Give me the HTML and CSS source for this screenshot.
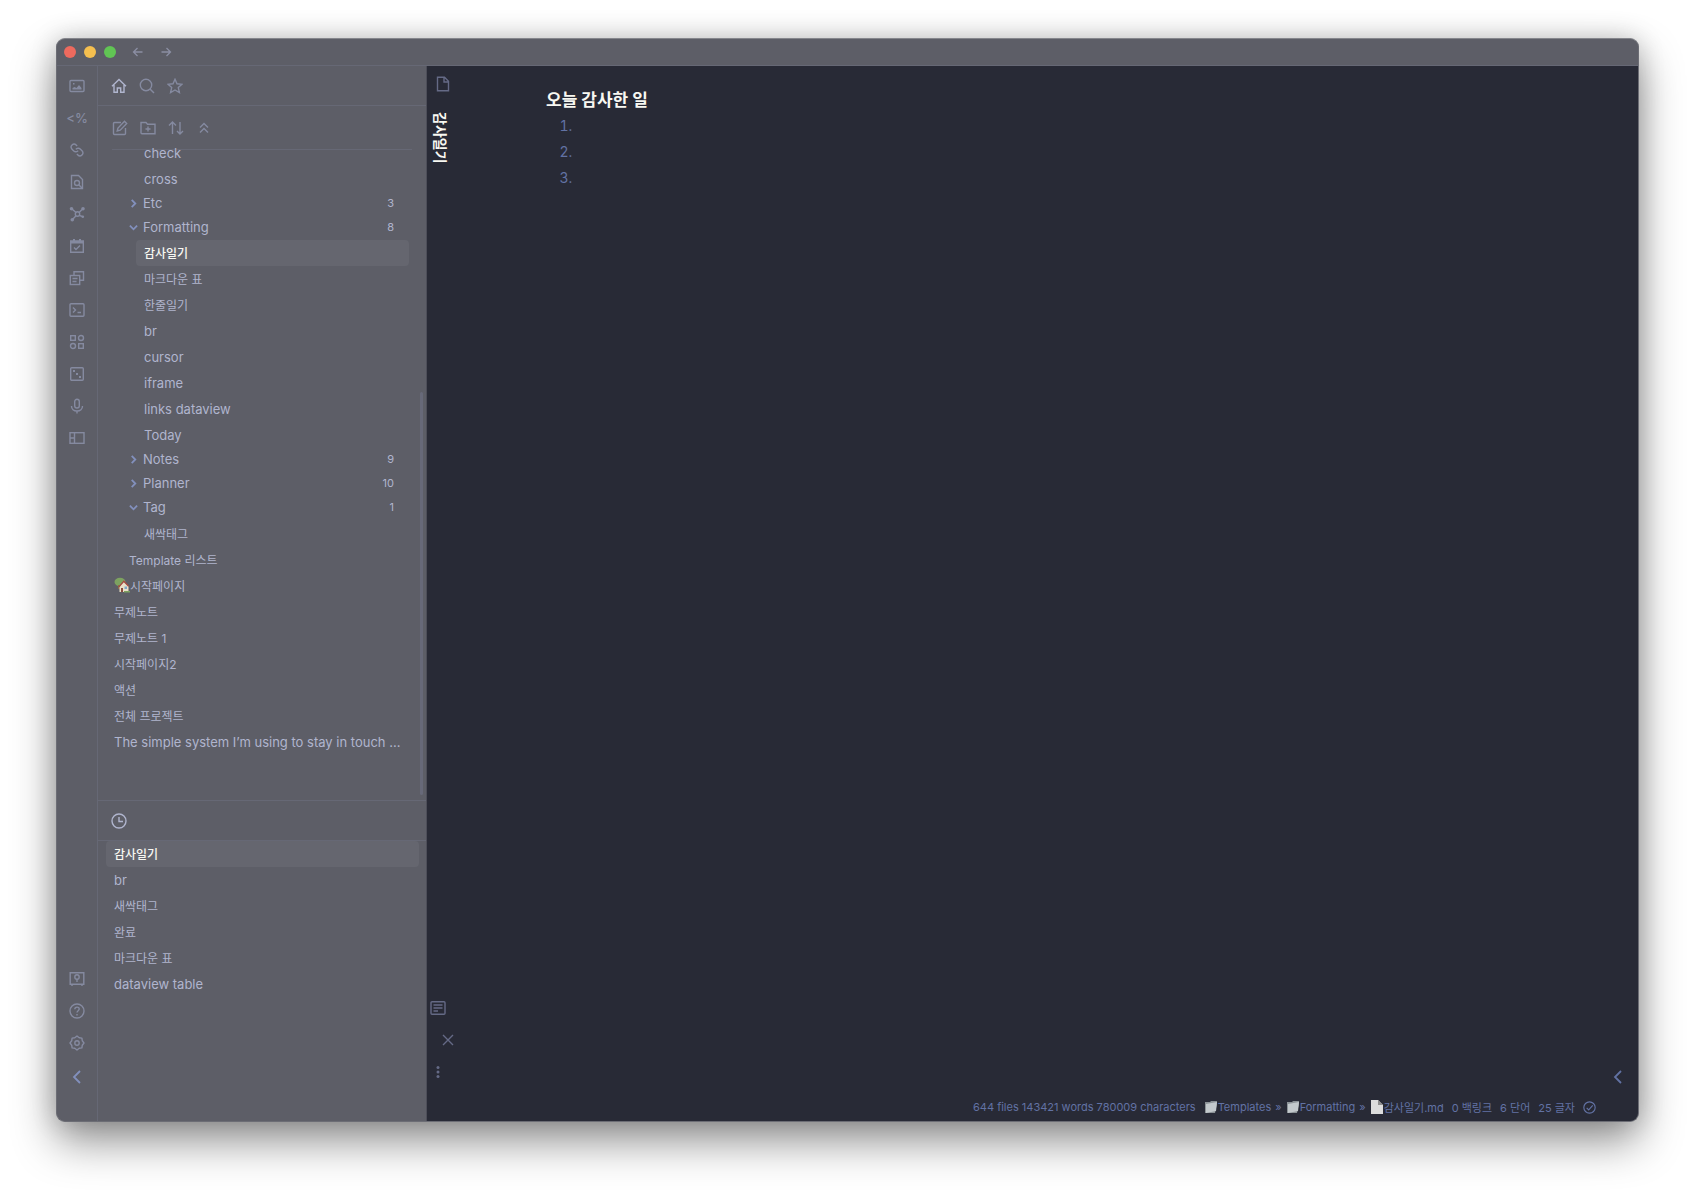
FILE: index.html
```
<!DOCTYPE html>
<html lang="ko">
<head>
    <meta charset="UTF-8">
    <meta name="viewport" content="width=device-width, initial-scale=1.0">
    <title>감사일기</title>
    <link rel="stylesheet" href="styles.css">
</head>
<body>
    <div class="window">
        <header class="titlebar">
            <span class="light red"></span>
            <span class="light yellow"></span>
            <span class="light green"></span>
            <button class="history" aria-label="Back"><svg viewBox="0 0 12 12"><path d="M10.500 6h-9M5.500 2 1.500 6l4 4"/></svg></button>
            <button class="history" aria-label="Forward"><svg viewBox="0 0 12 12"><path d="M1.500 6h9M6.500 2l4 4-4 4"/></svg></button>
        </header>

        <div class="workspace">
            <nav class="ribbon">
                <button aria-label="Images"><svg viewBox="0 0 16 16"><rect x="1" y="2.500" width="14" height="11" rx="1"/><path class="solid" d="M3.500 11.500v-1.500l2-1 2 1 2.500-3 2.500 3v1.500zM4 5h1.500v1.500H4z"/></svg></button>
                <button class="templater" aria-label="Templater">&lt;%</button>
                <button aria-label="Links"><svg class="chain" viewBox="0 0 24 24"><g transform="matrix(-1 0 0 1 24 0)"><path d="M10 13a5 5 0 0 0 7.540.540l3-3a5 5 0 0 0-7.070-7.070l-1.720 1.710"/><path d="M14 11a5 5 0 0 0-7.540-.540l-3 3a5 5 0 0 0 7.070 7.070l1.710-1.710"/></g></svg></button>
                <button aria-label="Search file"><svg viewBox="0 0 16 16"><path d="M13.500 14.500h-11v-13h7l4 4z"/><circle cx="8" cy="9" r="2.500"/><path d="m10 11 3 3"/></svg></button>
                <button aria-label="Graph view"><svg viewBox="0 0 16 16"><circle cx="8.500" cy="8" r="2.200"/><path d="M7 6.500 3 3M10.200 6.500 13 3.500M7 9.800 3.500 13.500M10.300 9.300l3 1.200"/><circle class="solid" cx="2.500" cy="2.800" r="1.800"/><circle class="solid" cx="14" cy="2.800" r="1.800"/><circle class="solid" cx="3.300" cy="13.700" r="1.800"/><circle class="solid" cx="13.800" cy="10.700" r="1.300"/></svg></button>
                <button aria-label="Daily note"><svg viewBox="0 0 16 16"><path d="M1.700 3h12.600v11.300H1.700z"/><path class="solid" d="M1.700 3h12.600v2.500H1.700zM4 1h2v3H4zM10 1h2v3h-2z"/><path d="m5 9.500 2 2 4-4"/></svg></button>
                <button aria-label="Templates"><svg viewBox="0 0 16 16"><path d="M5 5V1.700h9.500v8.600H11"/><rect x="1.300" y="5.500" width="9.400" height="9"/><path d="M3.500 8.500h5M3.500 11.500h4"/></svg></button>
                <button aria-label="Commands"><svg viewBox="0 0 16 16"><rect x="1" y="1.700" width="14" height="12.600" rx="1"/><path d="m4 5.500 2.500 2.500L4 10.500M8.500 10.500H12"/></svg></button>
                <button aria-label="Workspaces"><svg viewBox="0 0 16 16"><rect x="1.700" y="1.700" width="4.600" height="4.600"/><circle cx="12" cy="4" r="2.500"/><circle cx="4" cy="12" r="2.500"/><rect x="9.700" y="9.700" width="4.600" height="4.600"/></svg></button>
                <button aria-label="Random note"><svg viewBox="0 0 16 16"><rect x="1.700" y="1.700" width="12.600" height="12.600" rx="1"/><path class="solid" d="M4 4h2v2H4zM7 7h2v2H7zM10 10h2v2h-2z"/></svg></button>
                <button aria-label="Record"><svg viewBox="0 0 16 16"><rect x="5.700" y="1.200" width="4.600" height="8.800" rx="2.300"/><path d="M2.500 8c0 3 2.300 5 5.500 5s5.500-2 5.500-5M8 13v2.500"/></svg></button>
                <button aria-label="Layout"><svg viewBox="0 0 16 16"><rect x="1" y="2.700" width="14" height="10.600"/><path d="M5.500 3v10M1 8h4.500"/></svg></button>
                <span class="spacer"></span>
                <button aria-label="Vault"><svg viewBox="0 0 16 16"><path d="M1.200 1.700h13.600v11.600H1.200zM3 13.500v1.500M13 13.500v1.500"/><circle cx="8" cy="6" r="2.200"/><path d="M8 8v3"/></svg></button>
                <button aria-label="Help"><svg viewBox="0 0 16 16"><circle cx="8" cy="8" r="7"/><path d="M5.800 6.300C5.800 3.300 10.200 3.500 10.200 6 10.200 7.600 8 7.800 8 9.500M8 11v1.500"/></svg></button>
                <button aria-label="Settings"><svg viewBox="0 0 16 16"><path stroke-linejoin="round" d="m8 1 2.200 1.700 2.700.4.400 2.700L15 8l-1.700 2.200-.4 2.700-2.700.4L8 15l-2.200-1.700-2.700-.4-.4-2.700L1 8l1.700-2.200.4-2.700 2.700-.4z"/><circle cx="8" cy="8" r="2.200"/></svg></button>
                <button class="collapse" aria-label="Collapse sidebar"><svg viewBox="0 0 16 16"><path d="m11 2-6 6 6 6"/></svg></button>
            </nav>

            <aside class="sidebar">
                <div class="tabs">
                    <button class="current" aria-label="Files"><svg viewBox="0 0 16 16"><path d="M3 7v7.300h3.300V10h3.400v4.300H13V7M1 8.300 8 1.500l7 6.800"/></svg></button>
                    <button aria-label="Search"><svg viewBox="0 0 16 16"><circle cx="7" cy="7" r="5.700"/><path d="m11 11 4 4"/></svg></button>
                    <button aria-label="Starred"><svg viewBox="0 0 16 16"><path d="m8 1.300 2 4.500 5 .5-3.700 3.300 1.100 4.900L8 12l-4.400 2.500 1.100-4.900L1 6.300l5-.5z"/></svg></button>
                </div>

                <div class="explorer">
                    <div class="actions">
                        <button aria-label="New note"><svg viewBox="0 0 16 16"><path d="M9 2.500H2.500a1 1 0 0 0-1 1v10a1 1 0 0 0 1 1h10a1 1 0 0 0 1-1V8"/><path d="m6 8-.8 3 3-.8 6.500-6.700-2.200-2.200z"/></svg></button>
                        <button aria-label="New folder"><svg viewBox="0 0 16 16"><path d="M1 12.500v-10h5l1.500 1.700H15v9.600H2a1 1 0 0 1-1-1zM8 6.500v5M5.500 9h5"/></svg></button>
                        <button aria-label="Sort order"><svg viewBox="0 0 16 16"><path d="M4.500 14V2M1 5.500 4.500 2 8 5.500M12 2v12M9 11l3 3 3-3"/></svg></button>
                        <button aria-label="Collapse all"><svg viewBox="0 0 16 16"><path d="m4 7.500 4-4 4 4M4 12.500l4-4 4 4"/></svg></button>
                    </div>
                    <ul class="tree">
                        <li class="deep"><a href="#">check</a></li>
                        <li class="deep"><a href="#">cross</a></li>
                        <li class="folder"><button><svg viewBox="0 0 10 10"><path d="m3 1 4 4-4 4"/></svg>Etc<span class="count">3</span></button></li>
                        <li class="folder"><button><svg viewBox="0 0 10 10"><path d="m1 3 4 4 4-4"/></svg>Formatting<span class="count">8</span></button></li>
                        <li class="deep"><a class="active ko" href="#">감사일기</a></li>
                        <li class="deep"><a class="ko" href="#">마크다운 표</a></li>
                        <li class="deep"><a class="ko" href="#">한줄일기</a></li>
                        <li class="deep"><a href="#">br</a></li>
                        <li class="deep"><a href="#">cursor</a></li>
                        <li class="deep"><a href="#">iframe</a></li>
                        <li class="deep"><a href="#">links dataview</a></li>
                        <li class="deep"><a href="#">Today</a></li>
                        <li class="folder"><button><svg viewBox="0 0 10 10"><path d="m3 1 4 4-4 4"/></svg>Notes<span class="count">9</span></button></li>
                        <li class="folder"><button><svg viewBox="0 0 10 10"><path d="m3 1 4 4-4 4"/></svg>Planner<span class="count">10</span></button></li>
                        <li class="folder open"><button><svg viewBox="0 0 10 10"><path d="m1 3 4 4 4-4"/></svg>Tag<span class="count">1</span></button></li>
                        <li class="deep"><a class="ko" href="#">새싹태그</a></li>
                        <li class="nested"><a class="ko" href="#">Template 리스트</a></li>
                        <li><a class="ko" href="#"><svg class="house" viewBox="0 0 16 16"><ellipse cx="6" cy="5" rx="5.500" ry="4.200" fill="#7da260"/><path fill="#8b6b4a" d="M4 8h2v4H4z"/><path fill="#e9dfc8" d="M5.500 9 10 4.500 14.500 9v6h-9z"/><path fill="#a5473f" d="M4.500 9.500 9.800 3.300l5.400 5.600-1 .8-4.400-4.400-4.300 5z"/><path fill="#8a4b3c" d="M7 11h2v4H7z"/><path fill="#7fa9c9" d="M10.500 9.500H13V12h-2.500z"/><path fill="#7da260" d="M10 14h6v1.500h-6z"/></svg>시작페이지</a></li>
                        <li><a class="ko" href="#">무제노트</a></li>
                        <li><a class="ko" href="#">무제노트 1</a></li>
                        <li><a class="ko" href="#">시작페이지2</a></li>
                        <li><a class="ko" href="#">액션</a></li>
                        <li><a class="ko" href="#">전체 프로젝트</a></li>
                        <li><a href="#">The simple system I’m using to stay in touch ...</a></li>
                    </ul>
                    <span class="scrollbar"></span>
                </div>

                <div class="recent">
                    <div class="tabs">
                        <button class="current" aria-label="Recent files"><svg viewBox="0 0 16 16"><circle cx="8" cy="8" r="7"/><path d="M8 4v4.500h4"/></svg></button>
                    </div>
                    <ul class="files">
                        <li><a class="active ko" href="#">감사일기</a></li>
                        <li><a href="#">br</a></li>
                        <li><a class="ko" href="#">새싹태그</a></li>
                        <li><a class="ko" href="#">완료</a></li>
                        <li><a class="ko" href="#">마크다운 표</a></li>
                        <li><a href="#">dataview table</a></li>
                    </ul>
                </div>
            </aside>

            <main class="pane">
                <div class="pane-header">
                    <svg viewBox="0 0 16 16"><path d="M2.500 1.200h7l4 4v9.600h-11zM9 1.500V6h4.500"/></svg>
                    <div class="pane-title">감사일기</div>
                    <span class="spacer"></span>
                    <button aria-label="Preview"><svg viewBox="0 0 16 16"><rect x="1" y="1.700" width="14" height="12.600" rx="1"/><path d="M3.500 5h9M3.500 8h9M3.500 11H8"/></svg></button>
                    <button class="close" aria-label="Close"><svg viewBox="0 0 16 16"><path d="m3 3 10 10M13 3 3 13"/></svg></button>
                    <button aria-label="More options"><svg viewBox="0 0 16 16"><circle class="solid" cx="8" cy="3.500" r="1.500"/><circle class="solid" cx="8" cy="8" r="1.500"/><circle class="solid" cx="8" cy="12.500" r="1.500"/></svg></button>
                </div>
                <div class="editor">
                    <article class="note">
                        <h1>오늘 감사한 일</h1>
                        <ol>
                            <li></li>
                            <li></li>
                            <li></li>
                        </ol>
                    </article>
                    <button class="expand" aria-label="Expand right sidebar"><svg viewBox="0 0 16 16"><path d="m11 2-6 6 6 6"/></svg></button>
                    <footer class="statusbar">
                        <span class="totals">644 files 143421 words 780009 characters</span>
                        <span class="path">
                            <svg viewBox="0 0 14 14"><path fill="#8b9296" d="M1 2h5l1-1h6v3L11 13H1z"/><path fill="#c3c9cc" d="m2 4 11-2-1 9-10 2z"/></svg><span>Templates</span><span class="sep">»</span>
                            <svg viewBox="0 0 14 14"><path fill="#8b9296" d="M1 2h5l1-1h6v3L11 13H1z"/><path fill="#c3c9cc" d="m2 4 11-2-1 9-10 2z"/></svg><span>Formatting</span><span class="sep">»</span>
                            <svg viewBox="0 0 14 14"><path fill="#dcdcdc" d="M1 0h7l5 5v9H1z"/><path fill="#8e8e8e" d="M8 0v5h5z"/></svg><span>감사일기.md</span>
                        </span>
                        <span>0 백링크</span>
                        <span>6 단어</span>
                        <span>25 글자</span>
                        <svg class="sync" viewBox="0 0 16 16"><circle cx="8" cy="8" r="7"/><path d="m4.500 8.500 2.500 2.500 5-5.500"/></svg>
                    </footer>
                </div>
            </main>
        </div>
    </div>
</body>
</html>
```
FILE: styles.css
```
* {
    box-sizing: border-box;
}

body {
    margin: 0;
    height: 100vh;
    padding: 38px 56px 74px;
    background-color: #ffffff;
    color: #b0b5ce;
    font-family: Inter, "Noto Sans CJK KR", sans-serif;
    font-size: 13px;
}

ul, ol {
    list-style: none;
    margin: 0;
    padding: 0;
}

a {
    color: inherit;
    text-decoration: none;
}

button {
    display: flex;
    align-items: center;
    justify-content: center;
    padding: 0;
    border: none;
    background: none;
    color: inherit;
    font: inherit;
    cursor: pointer;
}

svg {
    display: block;
    flex: none;
    width: 16px;
    height: 16px;
    fill: none;
    stroke: currentColor;
    stroke-width: 1.4;
}

.solid {
    fill: currentColor;
    stroke: none;
}

.spacer {
    flex: 1;
}

/* App window */
.window {
    display: flex;
    flex-direction: column;
    height: 100%;
    overflow: hidden;
    border: 1px solid #6c6d75;
    border-top-color: #85868c;
    border-radius: 9px;
    background-color: #5d5e67;
    box-shadow: 0 20px 44px rgba(0, 0, 0, 0.42), 0 0 26px rgba(0, 0, 0, 0.18);
}

.titlebar {
    display: flex;
    align-items: center;
    height: 27px;
    padding-left: 7px;
    border-bottom: 1px solid #666875;
    color: #8b8ea3;
}

.light {
    width: 12px;
    height: 12px;
    margin-right: 8px;
    border-radius: 50%;
}

.red { background-color: #ed6a5e; }
.yellow { background-color: #f5bf4f; }
.green { background-color: #61c554; }

.history {
    width: 28px;
}

.history svg {
    width: 12px;
    height: 12px;
    stroke-width: 1.3;
}

.workspace {
    display: flex;
    flex: 1;
    min-height: 0;
}

/* Icon ribbon */
.ribbon {
    display: flex;
    flex-direction: column;
    width: 41px;
    padding: 4px 0 26px;
    border-right: 1px solid #666875;
    color: #858aa0;
}

.ribbon button {
    height: 32px;
}

.ribbon .templater {
    font-size: 13px;
    font-weight: 500;
}

.ribbon .chain {
    width: 14px;
    height: 14px;
    stroke-width: 2.4;
}

.ribbon .collapse {
    height: 36px;
    color: #8290bd;
}

.ribbon .collapse svg,
.expand svg {
    stroke-width: 1.8;
}

/* Sidebar */
.sidebar {
    display: flex;
    flex-direction: column;
    width: 329px;
    border-right: 1px solid #4d4e59;
}

.tabs {
    display: flex;
    align-items: center;
    gap: 12px;
    height: 40px;
    padding-left: 13px;
    border-bottom: 1px solid #666875;
    color: #858aa0;
}

.tabs .current {
    color: #b0b5ce;
}

.explorer {
    position: relative;
    flex: 1;
    min-height: 0;
    padding: 0 14px;
}

.actions {
    display: flex;
    align-items: center;
    gap: 12px;
    height: 44px;
    border-bottom: 1px solid #666875;
    color: #858aa0;
}

/* the list is scrolled a little under the toolbar */
.tree {
    margin: -10px 3px 0 -6px;
}

.tree a,
.files a {
    display: flex;
    align-items: center;
    height: 26px;
    padding-left: 8px;
    border-radius: 4px;
    white-space: nowrap;
}

.tree .ko,
.files .ko {
    padding-bottom: 2px;
    font-size: 12px;
}

.nested {
    margin-left: 15px;
}

.deep {
    margin-left: 30px;
}

.sidebar .active {
    background-color: #65666f;
    color: #f8f8f2;
    font-weight: 500;
}

.folder button {
    width: 100%;
    height: 24px;
    padding: 0 0 2px 23px;
    justify-content: flex-start;
}

.folder.open {
    margin-bottom: 1px;
}

.folder svg {
    width: 9px;
    height: 9px;
    margin-right: 5px;
    color: #8290bd;
    stroke-width: 2;
}

.count {
    margin-left: auto;
    margin-right: 15px;
    font-size: 11px;
}

.house {
    stroke: none;
}

.scrollbar {
    position: absolute;
    right: 3px;
    bottom: 5px;
    width: 3px;
    height: 58%;
    border-radius: 2px;
    background-color: #676979;
}

.recent {
    height: 321px;
    border-top: 1px solid #666875;
}

.files {
    padding: 0 7px 0 8px;
}

/* Editor pane */
.pane {
    display: flex;
    flex: 1;
    background-color: #282a36;
}

.pane-header {
    display: flex;
    flex-direction: column;
    width: 32px;
    padding: 10px 0 33px;
    color: #656a86;
}

.pane-header > svg {
    margin-left: 8px;
}

.pane-title {
    margin-top: 20px;
    color: #f8f8f2;
    font-size: 14px;
    font-weight: 700;
    line-height: 20px;
    writing-mode: vertical-rl;
    text-orientation: sideways;
    align-self: flex-start;
    padding-left: 3px;
}

.pane-header button {
    width: 22px;
    height: 32px;
}

.pane-header .close {
    width: 42px;
}

.editor {
    display: flex;
    flex: 1;
    flex-direction: column;
}

.note {
    flex: 1;
    padding: 22px 87px;
}

.note h1 {
    margin: 0;
    color: #f8f8f2;
    font-size: 17px;
    font-weight: 700;
    line-height: 25px;
}

.note ol {
    padding-left: 30px;
    color: #6272a4;
    font-size: 14px;
    line-height: 26px;
    list-style: decimal;
}

.expand {
    align-self: flex-end;
    width: 40px;
    height: 32px;
    color: #6272a4;
}

.statusbar {
    display: flex;
    align-items: center;
    justify-content: flex-end;
    gap: 8px;
    height: 28px;
    padding-right: 42px;
    color: #6272a4;
    font-size: 11px;
    white-space: nowrap;
}

.path {
    display: flex;
    align-items: center;
}

.path svg {
    width: 14px;
    height: 14px;
    stroke: none;
}

.sep {
    margin: 0 4px;
}

.sync {
    width: 13px;
    height: 13px;
}
```
